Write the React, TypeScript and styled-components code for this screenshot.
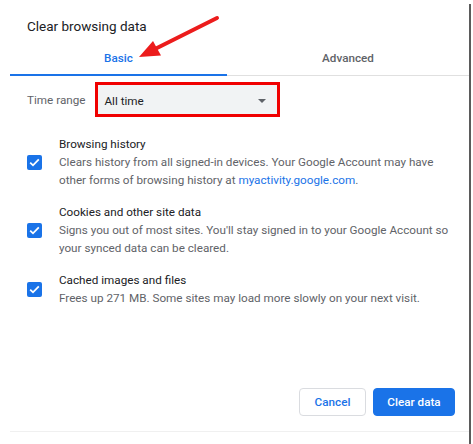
import React from "react";
import styled, { createGlobalStyle } from "styled-components";

const GlobalStyle = createGlobalStyle`
  html, body {
    margin: 0;
    padding: 0;
    background: #fff;
  }
  body {
    font-family: Roboto, "Liberation Sans", Arial, sans-serif;
    color: #202124;
  }
`;

// Layout
const Page = styled.div`
  position: relative;
  width: 473px;
  height: 444px;
  overflow: hidden;
`;
const Dialog = styled.section`
  box-sizing: border-box;
  width: 461px;
  height: 440px;
  margin: 4px 0 0 10px;
  border-right: 2px solid #5b5b5b;
`;
const Body = styled.div`
  box-sizing: border-box;
  height: 428px;
  display: flex;
  flex-direction: column;
  border-bottom: 1px solid #f0f0f0;
`;
const Title = styled.h2`
  margin: 0;
  padding: 12px 0 0 17px;
  font-size: 13.5px;
  line-height: 20px;
  font-weight: 400;
  color: #202124;
`;

// Tabs
const TabList = styled.div`
  display: flex;
  margin-top: 4px;
  border-bottom: 1px solid #e0e0e0;
`;
const Tab = styled.div<{ $active?: boolean; $width: number }>`
  box-sizing: border-box;
  width: ${({ $width }) => $width}px;
  height: 36px;
  line-height: 36px;
  text-align: center;
  font-size: 11.7px;
  font-weight: 500;
  color: ${({ $active }) => ($active ? "#1a73e8" : "#5f6368")};
  border-bottom: 2px solid
    ${({ $active }) => ($active ? "#1a73e8" : "transparent")};
  margin-bottom: -1px;
`;

// Time range
const RangeRow = styled.div`
  display: flex;
  align-items: center;
  gap: 10px;
  margin: 6px 0 0 17px;
`;
const RangeLabel = styled.span`
  font-size: 11.7px;
  color: #5f6368;
`;
const Select = styled.div`
  box-sizing: border-box;
  width: 185px;
  height: 35px;
  display: flex;
  align-items: center;
  justify-content: space-between;
  padding: 2px 11px 0 6px;
  background: #f1f3f4;
  border: 3px solid #f00000;
  font-size: 11.7px;
  color: #202124;
`;
const Caret = styled.span`
  width: 0;
  height: 0;
  border-left: 4px solid transparent;
  border-right: 4px solid transparent;
  border-top: 4px solid #5f6368;
`;

// Checkbox items
const ItemList = styled.div`
  margin-top: 11px;
`;
const Item = styled.div`
  display: flex;
  align-items: center;
  gap: 17px;
  padding: 7px 0 7px 17px;
`;
const Check = styled.span`
  flex: none;
  width: 15px;
  height: 15px;
  border-radius: 2px;
  background: #1a73e8;
  display: flex;
  align-items: center;
  justify-content: center;
`;
const ItemText = styled.div`
  width: 395px;
  font-size: 11.7px;
  line-height: 18px;
`;
const ItemTitle = styled.div`
  color: #202124;
`;
const ItemDesc = styled.div`
  color: #5f6368;
  a {
    color: #1a73e8;
    text-decoration: none;
  }
`;

// Footer
const Footer = styled.div`
  margin-top: auto;
  display: flex;
  justify-content: flex-end;
  gap: 7px;
  padding: 0 14px 15px 0;
`;
const Button = styled.button<{ $primary?: boolean }>`
  box-sizing: border-box;
  height: 28px;
  width: ${({ $primary }) => ($primary ? "82px" : "67px")};
  padding: 0;
  border-radius: 4px;
  border: 1px solid ${({ $primary }) => ($primary ? "#1a73e8" : "#dadce0")};
  background: ${({ $primary }) => ($primary ? "#1a73e8" : "#fff")};
  color: ${({ $primary }) => ($primary ? "#fff" : "#1a73e8")};
  font-family: inherit;
  font-size: 11.7px;
  font-weight: 500;
`;

const Arrow = styled.svg`
  position: absolute;
  left: 0;
  top: 0;
  pointer-events: none;
`;

const CheckMark = () => (
  <svg width="11" height="9" viewBox="0 0 11 9">
    <path
      d="M1.2 4.6 L4 7.3 L9.8 1.4"
      fill="none"
      stroke="#fff"
      strokeWidth="1.8"
    />
  </svg>
);

const items = [
  {
    title: "Browsing history",
    desc: (
      <>
        Clears history from all signed-in devices. Your Google Account may have
        other forms of browsing history at <a href="#">myactivity.google.com</a>
        .
      </>
    ),
  },
  {
    title: "Cookies and other site data",
    desc: (
      <>
        Signs you out of most sites. You'll stay signed in to your Google
        Account so your synced data can be cleared.
      </>
    ),
  },
  {
    title: "Cached images and files",
    desc: <>Frees up 271 MB. Some sites may load more slowly on your next visit.</>,
  },
];

const App = () => {
  return (
    <Page>
      <GlobalStyle />
      <Dialog>
        <Body>
          <Title>Clear browsing data</Title>
          <TabList>
            <Tab $active $width={217}>
              Basic
            </Tab>
            <Tab $width={242}>Advanced</Tab>
          </TabList>
          <RangeRow>
            <RangeLabel>Time range</RangeLabel>
            <Select>
              All time
              <Caret />
            </Select>
          </RangeRow>
          <ItemList>
            {items.map((item) => (
              <Item key={item.title}>
                <Check>
                  <CheckMark />
                </Check>
                <ItemText>
                  <ItemTitle>{item.title}</ItemTitle>
                  <ItemDesc>{item.desc}</ItemDesc>
                </ItemText>
              </Item>
            ))}
          </ItemList>
          <Footer>
            <Button>Cancel</Button>
            <Button $primary>Clear data</Button>
          </Footer>
        </Body>
      </Dialog>
      <Arrow width="473" height="444" viewBox="0 0 473 444">
        <line
          x1="217"
          y1="18"
          x2="154"
          y2="49.5"
          stroke="#ec1c1c"
          strokeWidth="4"
          strokeLinecap="round"
        />
        <polygon points="139,57 153,41 161,55.5" fill="#ec1c1c" />
      </Arrow>
    </Page>
  );
};

export default App;
